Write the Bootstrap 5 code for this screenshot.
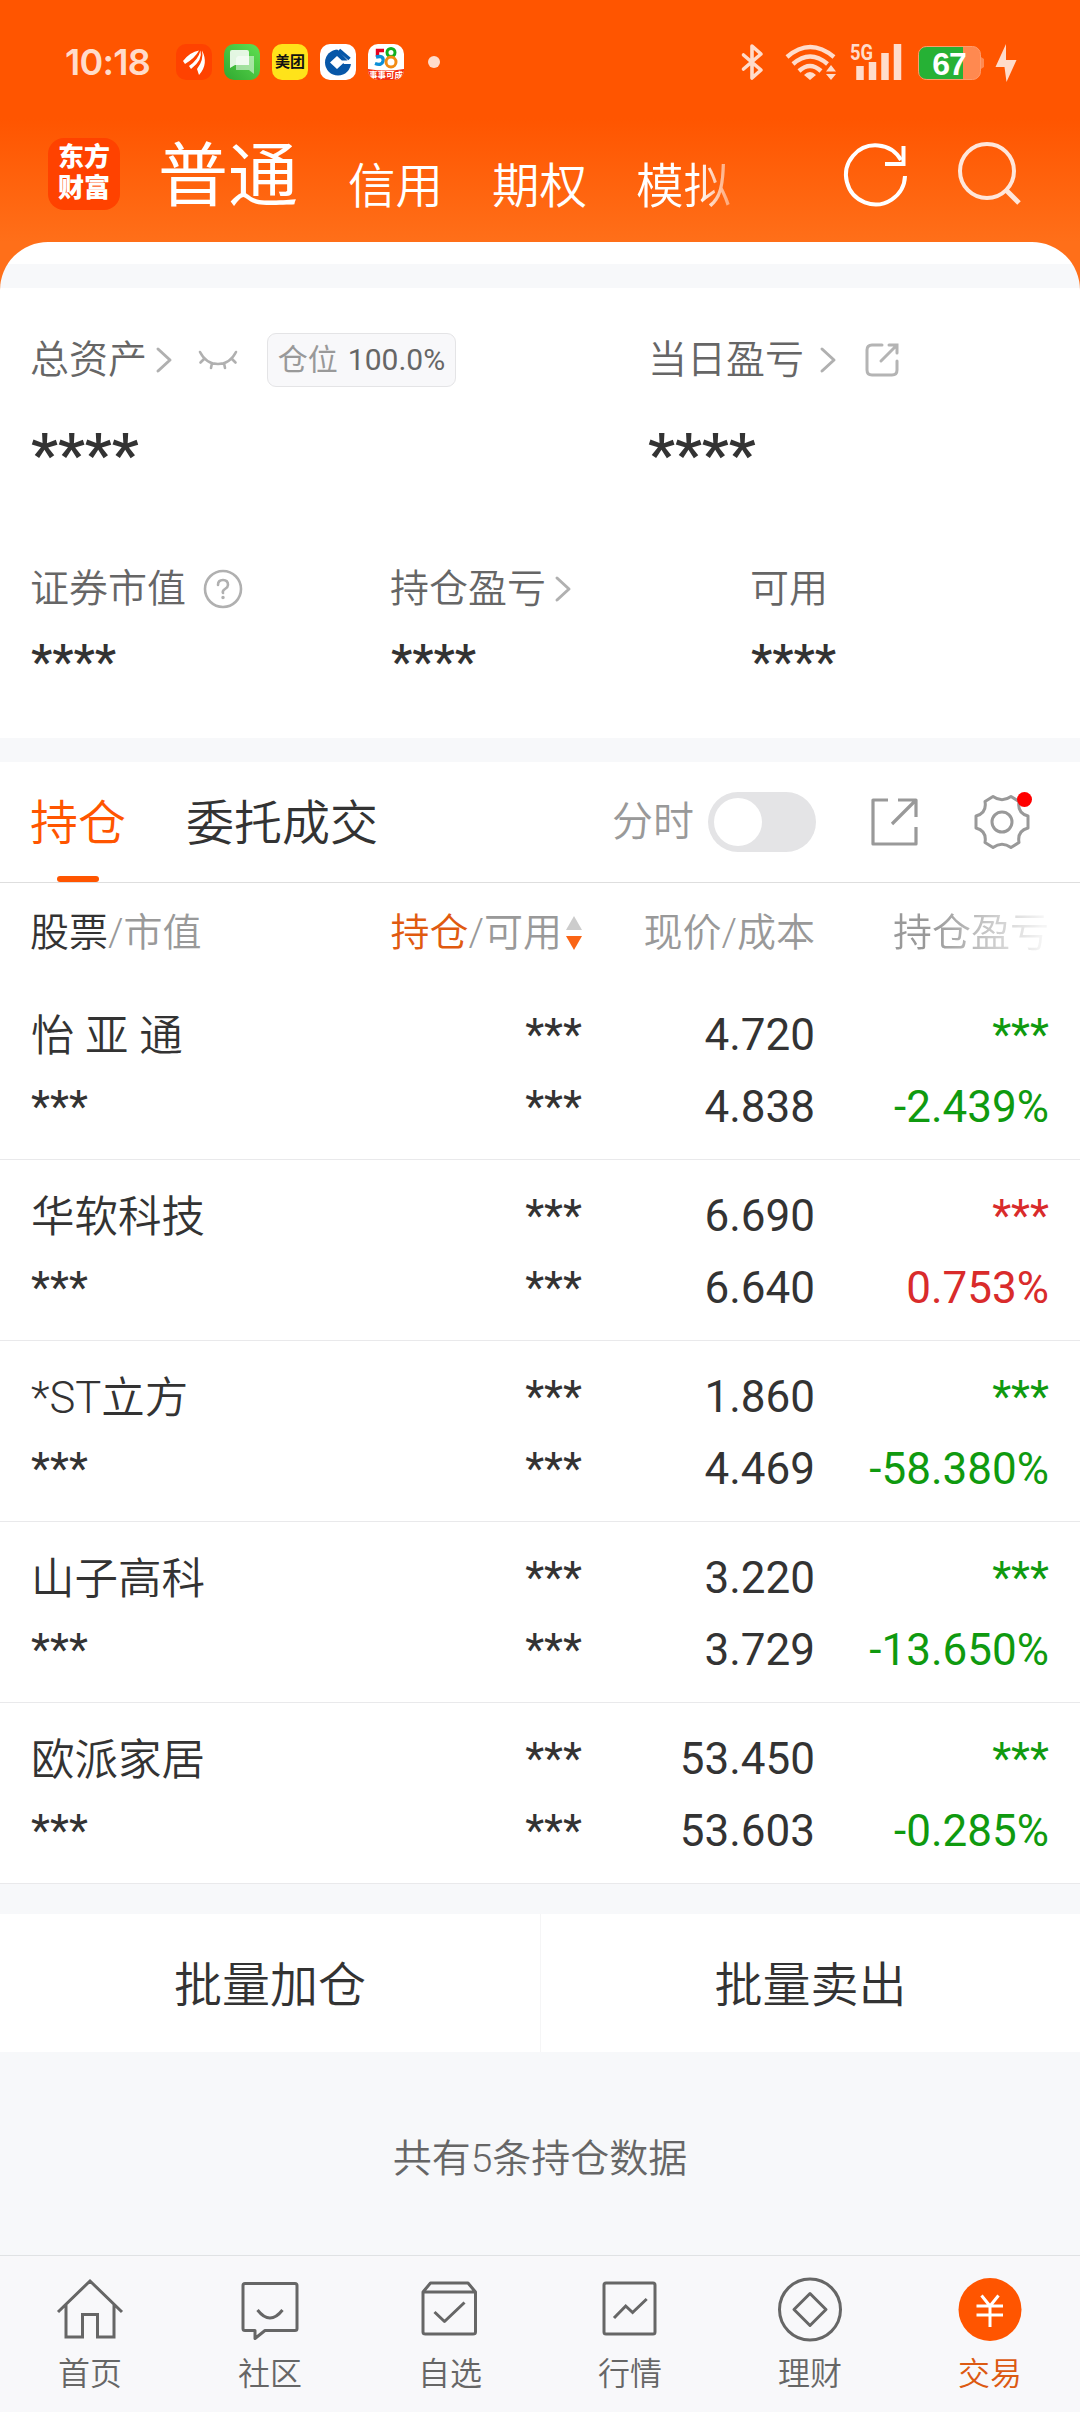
<!DOCTYPE html>
<html lang="zh-CN">
<head>
<meta charset="utf-8">
<meta name="viewport" content="width=device-width, initial-scale=1">
<title>交易</title>
<link href="https://cdn.jsdelivr.net/npm/bootstrap@5.3.0/dist/css/bootstrap.min.css" rel="stylesheet">
<style>
body{width:1080px;height:2412px;overflow:hidden;background:#f7f8fa;color:#333;font-family:Roboto,"Noto Sans CJK SC",sans-serif;font-size:39px;line-height:1;font-weight:350;letter-spacing:0}
svg{display:block;flex:none;fill:none;overflow:visible}
.num{font-weight:400}
.ink{color:#333}
.top-zone{height:290px;background:linear-gradient(#ff5500 0,#ff5500 118px,#ff6f19 242px)}
.status-row{height:124px;padding-left:65px;color:#ffdccb}
.clock{font:600 36px/40px Inter,sans-serif;letter-spacing:-.7px;width:111px}
.app-tile{width:36px;height:36px;border-radius:10px;margin-right:12px;overflow:hidden;flex:none}
.meituan{background:#ffe31a;color:#111;font-size:15px;font-weight:700;line-height:36px;text-align:center}
.tabs-row{height:118px;padding-left:48px;color:#fff}
.brand-tile{width:72px;height:72px;border-radius:16px;background:#ff4200;font-size:26px;font-weight:900;line-height:31px;text-align:center;padding-top:4px;margin-top:14px}
.tab-main{font-size:70px;font-weight:400;line-height:74px;margin:16px 0 0 38px;width:190px}
.tab-sub{font-size:47.5px;font-weight:350;line-height:60px;width:144px;margin-top:33px}
.tab-fade{-webkit-mask-image:linear-gradient(90deg,#000 62px,rgba(0,0,0,.4) 95px)}
.sheet-cap{height:48px;background:linear-gradient(#fff 22px,#f7f8fa 22px 46px,#fff 46px);border-radius:48px 48px 0 0}
.panel{background:#fff}
.lbl{color:#666}
.summary{height:448px;padding:0 31px}
.r1{height:54px;margin-top:43px}
.nudge-l{margin-left:-1px}
.half{width:617px}
.third{width:360px}
.pos-tag{width:189px;height:54px;border:1px solid #e4e4e6;border-radius:9px;background:#f8f8fa;font-size:30px;color:#666;margin-left:29px}
.pos-tag i{font-style:normal;color:#999;margin-right:10px}
.star-lg{font-size:60px;font-weight:600;line-height:60px}
.star-md{font-size:48px;font-weight:500;line-height:50px}
.band{height:24px;background:#f7f8fa}
.tabbar{height:121px;border-bottom:1px solid #dedede;padding-left:31px;font-size:48px}
.tabbar .on{color:#ff5500;height:120px;width:92px;padding-top:3px}
.on::after{content:"";position:absolute;left:26px;bottom:0;width:42px;height:6px;border-radius:3px;background:#ff5500}
.toggle{width:108px;height:60px;border-radius:30px;background:#e4e4e6;padding:6px}
.toggle span{display:block;width:48px;height:48px;border-radius:50%;background:#fff}
.grid-line{display:grid;grid-template-columns:350px 201px 233px 234px;padding:0 31px;align-content:start}
.grid-line>div{text-align:right;white-space:nowrap}
.grid-line>div:first-child{text-align:left}
.thead-line{height:96px;padding-top:30px;line-height:40px;color:#999}
.fade-r{-webkit-mask-image:linear-gradient(90deg,#000 50%,rgba(0,0,0,.1) 97%)}
.stock{height:181px;border-bottom:1px solid #e9e9eb;padding-top:20px;font-size:44px;line-height:72px}
.stock .nm{font-size:43.5px;height:72px;padding-top:2px}
.fall{color:#0f9a0f}.rise{color:#d92b2b}
.batch{height:138px;margin-top:30px;background:#fff;font-size:48px}
.batch>div{padding-top:6px}
.batch div+div{border-left:1px solid #f5f5f6}
.total{height:203px;color:#666;padding-top:12px}
.navbar-b{height:157px;border-top:1px solid #e0e2e4;background:#f8f8fa;color:#666;font-size:32px;padding-top:17px}
.navbar-b svg{stroke:#666;stroke-width:3;margin-bottom:13px}
</style>
</head>
<body>
<header class="top-zone">
  <div class="status-row d-flex align-items-center">
    <div class="clock">10:18</div>
    <div class="app-tile" style="background:#ff4200"><svg width="36" height="36"><path fill="#fff" d="M7 17Q14 8 23 6.500Q19 14 9 20ZM13 22Q22 16 24.500 6.500Q27 16 15 25ZM21 25Q28 16 26 6.500Q33 20 23 31Z"/></svg></div>
    <div class="app-tile" style="background:linear-gradient(45deg,#30a831,#60e050)"><svg width="36" height="36"><path fill="#fff" fill-opacity=".5" d="M14 12H30V30L25 26H12V14Z"/><path fill="#fff" fill-opacity=".85" d="M8 6H23Q25 6 25 8V21H11L6 24V8Q6 6 8 6Z"/></svg></div>
    <div class="app-tile meituan">美团</div>
    <div class="app-tile bg-white"><svg width="36" height="36"><circle cx="18" cy="18.500" r="13" fill="#0757a8"/><path fill="#fff" d="M17 12L24 18.500L17 25L10 18.500ZM22 16.500H36V20H24ZM17 5L22 3L33 12V17H28Z"/><path stroke="#0757a8" stroke-width="3.600" d="M19 6L29.500 15"/></svg></div>
    <div class="app-tile bg-white"><svg width="36" height="36"><path fill="#f33012" d="M0 25Q18 28 36 25V36H0Z"/><path stroke="#e60020" stroke-width="3.400" d="M16 6.500H9.500V13"/><path stroke="#0b8fd8" stroke-width="3.400" d="M8 13Q16 11 15 17Q14 22 7 19.500"/><circle cx="23" cy="8.500" r="4" stroke="#12b020" stroke-width="3"/><circle cx="23" cy="18" r="5" stroke="#f28b13" stroke-width="3"/><text x="18" y="34" text-anchor="middle" font-size="8.500" font-weight="700" fill="#fff">事事可成</text></svg></div>
    <svg width="12" height="12" style="margin-left:12px"><circle cx="6" cy="6" r="6" fill="#ffdccb"/></svg>
    <svg width="280" height="40" viewBox="740 42 280 40" style="margin-left:300px" stroke="#ffdccb">
      <path stroke-width="3.600" stroke-linejoin="round" stroke-linecap="round" d="M743.500 55L761 70L752 78V46L761 54L743.500 69"/>
      <g stroke-width="4.400"><path d="M787 57Q810 37 834 57"/><path d="M793 64Q810 49 827.500 64"/><path d="M799 71Q810 61 821 71"/></g>
      <path fill="#ffdccb" stroke="none" d="M804 75Q810 69 816 75L810 80ZM826 71.500L831 65L836 71.500ZM826 74L831 80L836 74Z"/>
      <text x="850" y="59.500" font-family="Roboto" font-size="22" font-weight="700" fill="#ffdccb" stroke="none" textLength="23" lengthAdjust="spacingAndGlyphs">5G</text>
      <g stroke-width="7.500"><path d="M860 66V80M872.500 62V80M885 53V80M897.500 44V80"/></g>
      <rect x="918.500" y="46.500" width="62" height="33" rx="8" fill="#ff8950" stroke="#ff9c6c"/><path stroke="none" fill="#ff8950" d="M981 57L984 59V67L981 69Z"/>
      <path fill="#26b135" stroke="none" d="M963 47H927Q919 47 919 55V71Q919 79 927 79H963Z"/>
      <text x="949" y="74.500" text-anchor="middle" font-family="Liberation Sans" font-size="32" font-weight="700" fill="#fff" stroke="none" letter-spacing="-1">67</text>
      <path fill="#ffdccb" stroke="none" d="M1006 44L995.500 67H1004.500L1006.500 82L1016.500 60H1006Z"/>
    </svg>
  </div>
  <nav class="tabs-row d-flex">
    <div class="brand-tile">东方<br>财富</div>
    <div class="tab-main">普通</div>
    <div class="tab-sub">信用</div><div class="tab-sub">期权</div><div class="tab-sub tab-fade">模拟</div>
    <svg width="180" height="70" viewBox="844 140 180 70" style="margin:16px 0 0 64px"><g stroke="#fff" stroke-width="4"><path d="M905 176A29.500 29.500 0 1 1 901 160"/><path d="M885 164H903.500V146"/></g><g stroke="#ffe6da" stroke-width="4"><circle cx="987" cy="171" r="27"/><path stroke-width="5" d="M1006 190L1019 203"/></g></svg>
  </nav>
  <div class="sheet-cap"></div>
</header>
<main>
  <section class="panel summary lbl overflow-hidden">
    <div class="r1 d-flex">
      <div class="half d-flex align-items-center"><span class="nudge-l">总资产</span><svg width="16" height="26" style="margin-left:9px" stroke="#b0b0b0" stroke-width="3" stroke-linecap="round" stroke-linejoin="round"><path d="M2 2L14 13L2 24"/></svg>
        <svg width="40" height="20" style="margin-left:26px" stroke="#b0b0b0" stroke-width="2.600" stroke-linecap="round"><path d="M2 2Q8 14 20 14T38 2M6 9L2.500 12.500M34 9L37.500 12.500M14 13L13 18M26 13L27 18"/></svg>
        <div class="pos-tag num d-flex align-items-center justify-content-center"><i>仓位</i>100.0%</div></div>
      <div class="d-flex align-items-center">当日盈亏<svg width="16" height="26" style="margin-left:16px" stroke="#b0b0b0" stroke-width="3" stroke-linecap="round" stroke-linejoin="round"><path d="M2 2L14 13L2 24"/></svg>
        <svg width="34" height="34" style="margin-left:29px" stroke="#b4b4b4" stroke-width="3" stroke-linecap="round"><path d="M17 2H7Q2 2 2 7V27Q2 32 7 32H27Q32 32 32 27V18M24 2H32V10M32 2L16 18"/></svg></div>
    </div>
    <div class="d-flex ink" style="margin-top:38px"><div class="half star-lg">****</div><div class="star-lg">****</div></div>
    <div class="d-flex align-items-center" style="height:54px;margin-top:77px">
      <div class="third d-flex align-items-center"><span class="nudge-l">证券市值</span><svg width="40" height="40" style="margin-left:17px" stroke="#b0b0b0" stroke-width="2.600"><circle cx="20" cy="20" r="18"/><path stroke-linecap="round" d="M15 16Q15 11 20 11T25 16Q25 18 22 20T20 24"/><circle cx="20" cy="28.500" r="1" fill="#b0b0b0" stroke-width="1.500"/></svg></div>
      <div class="third d-flex align-items-center"><span class="nudge-l">持仓盈亏</span><svg width="16" height="26" style="margin-left:9px" stroke="#b0b0b0" stroke-width="3" stroke-linecap="round" stroke-linejoin="round"><path d="M2 2L14 13L2 24"/></svg></div>
      <div class="nudge-l">可用</div>
    </div>
    <div class="d-flex star-md ink" style="margin-top:21px"><div class="third">****</div><div class="third">****</div><div>****</div></div>
  </section>
  <div class="band"></div>
  <section class="panel">
    <div class="tabbar d-flex align-items-center">
      <div class="on position-relative d-flex align-items-center text-nowrap"><span class="nudge-l">持仓</span></div><div style="margin-left:63px;width:426px;padding-top:3px">委托成交</div>
      <div style="font-size:41px;color:#999;width:96px;padding-top:1px">分时</div><div class="toggle"><span></span></div>
      <svg width="48" height="48" style="margin-left:55px" stroke="#999" stroke-width="3.200"><path stroke-linejoin="round" d="M17 2H2V46H45V29M27 2H45V19M45 2L21 26"/></svg>
      <svg width="60" height="60" viewBox="-30 -30 60 60" style="margin-left:53px" stroke="#999" stroke-width="3"><path stroke-linejoin="round" d="M-9 -25.500Q0 -19 9 -25.500L17 -20.500Q15 -9 26 -6V6Q15 9 17 20.500L9 25.500Q0 19 -9 25.500L-17 20.500Q-15 9 -26 6V-6Q-15 -9 -17 -20.500Z"/><circle r="10"/><circle cx="22.500" cy="-22.500" r="7.500" fill="#f00" stroke="none"/></svg>
    </div>
    <div class="grid-line thead-line">
      <div class="nudge-l"><span class="ink">股票</span>/市值</div>
      <div class="d-flex justify-content-end"><span style="color:#e05a10">持仓</span>/可用<svg width="16" height="34" style="margin:3px 0 0 4px"><path fill="#ccc" d="M8 0L16 14H0Z"/><path fill="#fa6414" d="M0 20H16L8 34Z"/></svg></div>
      <div>现价/成本</div><div class="fade-r">持仓盈亏</div>
    </div>
    <div id="rows"></div>
  </section>
  <div class="batch d-flex"><div class="col-6 d-flex align-items-center justify-content-center">批量加仓</div><div class="col-6 d-flex align-items-center justify-content-center">批量卖出</div></div>
  <div class="total d-flex align-items-center justify-content-center">共有5条持仓数据</div>
</main>
<footer class="navbar-b d-flex">
  <div class="col-2 d-flex flex-column align-items-center"><svg width="72" height="72"><path d="M4 39L36 8L68 39M12 31V64H28.500V41.500H43.500V64H60V31"/></svg>首页</div>
  <div class="col-2 d-flex flex-column align-items-center"><svg width="72" height="72" stroke-linejoin="round"><path d="M11 10.500H61Q63 10.500 63 12.500V55.500Q63 57.500 61 57.500H31L21 65.500V57.500H11Q9 57.500 9 55.500V12.500Q9 10.500 11 10.500ZM23.500 37Q36 53 48.500 37"/></svg>社区</div>
  <div class="col-2 d-flex flex-column align-items-center"><svg width="72" height="72" stroke-linejoin="round"><path d="M9 19L16.500 10H54L61.500 19V59Q61.500 61 59 61H11.500Q9 61 9 59ZM9 19H61.500M20.500 39L30.500 48.500L50.500 29.500"/></svg>自选</div>
  <div class="col-2 d-flex flex-column align-items-center"><svg width="72" height="72"><rect x="10" y="10" width="51" height="51" rx="2"/><path d="M20 45L31.700 33L38.600 39.500L52.700 26"/></svg>行情</div>
  <div class="col-2 d-flex flex-column align-items-center"><svg width="72" height="72" stroke-linejoin="round"><circle cx="36" cy="36.500" r="30.500"/><path d="M36 20.500L52 36.500L36 52.500L20 36.500Z"/></svg>理财</div>
  <div class="col-2 d-flex flex-column align-items-center" style="color:#dc5a12"><svg width="72" height="72"><circle cx="36" cy="36.500" r="31.500" fill="#ff5500" stroke="none"/><path stroke="#fff" d="M27.500 22.500L36 33L44.500 22.500M22.500 33H49M22.500 42H49M36 33V54"/></svg>交易</div>
</footer>
<script>
const stocks = [
  ['怡 亚 通','4.720','4.838','-2.439%'],
  ['华软科技','6.690','6.640','0.753%'],
  ['*ST立方','1.860','4.469','-58.380%'],
  ['山子高科','3.220','3.729','-13.650%'],
  ['欧派家居','53.450','53.603','-0.285%']
];
document.getElementById('rows').innerHTML = stocks.map(([n,p,c,r]) => {
  const k = r[0] === '-' ? 'fall' : 'rise';
  return `<div class="stock grid-line"><div class="nm">${n}</div><div class="num">***</div><div class="num">${p}</div><div class="num ${k}">***</div><div class="num text-start">***</div><div class="num">***</div><div class="num">${c}</div><div class="num ${k}">${r}</div></div>`;
}).join('');
</script>
<script src="https://cdn.jsdelivr.net/npm/bootstrap@5.3.0/dist/js/bootstrap.bundle.min.js"></script>
</body>
</html>
